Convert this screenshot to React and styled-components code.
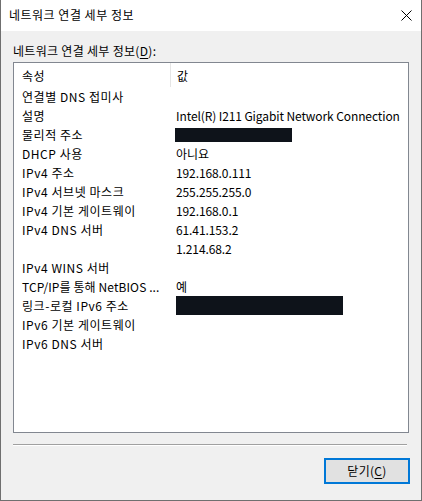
import React from 'react';
import styled, { createGlobalStyle } from 'styled-components';

const Global = createGlobalStyle`
  html, body {
    margin: 0;
    padding: 0;
    background: #ffffff;
  }
  body {
    font-family: "Noto Sans CJK KR", "Noto Sans", sans-serif;
    font-size: 12px;
    color: #000;
  }
`;

const Window = styled.div`
  width: 422px;
  height: 501px;
  box-sizing: border-box;
  border: 1px solid #6f6f6f;
  border-top: none;
  display: flex;
  flex-direction: column;
  background: #f0f0f0;
`;

const TitleBar = styled.div`
  height: 31px;
  background: #ffffff;
  display: flex;
  align-items: center;
  justify-content: space-between;
  padding: 0 9px 0 8px;
`;

const Title = styled.div`
  font-size: 12px;
  line-height: 16px;
  margin-top: -1px;
  letter-spacing: 0.5px;
`;

const Body = styled.div`
  flex: 1;
  display: flex;
  flex-direction: column;
  padding: 12px 12px 14px 12px;
`;

const Label = styled.div`
  line-height: 16px;
  margin-bottom: 3px;
  letter-spacing: 0.3px;
  & u {
    text-decoration: underline;
    text-underline-offset: 2px;
  }
`;

const ListBox = styled.div`
  height: 371px;
  width: 396px;
  box-sizing: border-box;
  border: 1px solid #828790;
  background: #ffffff;
  display: flex;
  flex-direction: column;
`;

const Row = styled.div`
  display: grid;
  grid-template-columns: 156px 1fr;
  height: ${(p) => (p.$header ? 24 : 19)}px;
  align-items: center;
  line-height: 19px;
  white-space: nowrap;
`;

const Cell = styled.div`
  padding-left: ${(p) => (p.$first ? 8 : 6)}px;
  height: 100%;
  display: flex;
  align-items: center;
  border-left: ${(p) => (p.$divider ? '1px solid #e5e5e5' : 'none')};
  letter-spacing: ${(p) => (p.$tight ? '0.1px' : p.$first ? '0.55px' : '-0.1px')};
  overflow: hidden;
`;

const Redacted = styled.span`
  display: inline-block;
  background: #0e131a;
  width: ${(p) => p.$w}px;
  height: ${(p) => p.$h}px;
  margin-left: ${(p) => p.$ml || 0}px;
`;

const Separator = styled.div`
  margin-top: 11px;
  width: 394px;
  height: 1px;
  background: #a0a0a0;
  border-bottom: 1px solid #ffffff;
`;

const Footer = styled.div`
  display: flex;
  justify-content: flex-end;
  margin-top: 12px;
`;

const Button = styled.button`
  width: 86px;
  height: 26px;
  box-sizing: border-box;
  border: 2px solid #0078d7;
  background: #e1e1e1;
  font-family: inherit;
  font-size: 12px;
  color: #000;
  padding: 0;
  margin-right: -1px;
  line-height: 20px;
  letter-spacing: 0.3px;
  & u {
    text-underline-offset: 2px;
  }
`;

const rows = [
  ['연결별 DNS 접미사', ''],
  ['설명', 'Intel(R) I211 Gigabit Network Connection'],
  ['물리적 주소', <Redacted $w={117} $h={14} $ml={-1} />],
  ['DHCP 사용', '아니요'],
  ['IPv4 주소', '192.168.0.111'],
  ['IPv4 서브넷 마스크', '255.255.255.0'],
  ['IPv4 기본 게이트웨이', '192.168.0.1'],
  ['IPv4 DNS 서버', '61.41.153.2'],
  ['', '1.214.68.2'],
  ['IPv4 WINS 서버', ''],
  ['TCP/IP를 통해 NetBIOS ...', '예', true],
  ['링크-로컬 IPv6 주소', <Redacted $w={167} $h={19} />],
  ['IPv6 기본 게이트웨이', ''],
  ['IPv6 DNS 서버', ''],
];

export default function App() {
  return (
    <Window>
      <Global />
      <TitleBar>
        <Title>네트워크 연결 세부 정보</Title>
        <svg width="11" height="11" viewBox="0 0 11 11">
          <path d="M0.5 0.5 L10.5 10.5 M10.5 0.5 L0.5 10.5" stroke="#000" strokeWidth="1" />
        </svg>
      </TitleBar>
      <Body>
        <Label>
          네트워크 연결 세부 정보(<u>D</u>):
        </Label>
        <ListBox>
          <Row $header>
            <Cell $first>속성</Cell>
            <Cell $divider>값</Cell>
          </Row>
          {rows.map(([k, v, tight], i) => (
            <Row key={i}>
              <Cell $first $tight={tight}>{k}</Cell>
              <Cell>{v}</Cell>
            </Row>
          ))}
        </ListBox>
        <Separator />
        <Footer>
          <Button>
            닫기(<u>C</u>)
          </Button>
        </Footer>
      </Body>
    </Window>
  );
}
